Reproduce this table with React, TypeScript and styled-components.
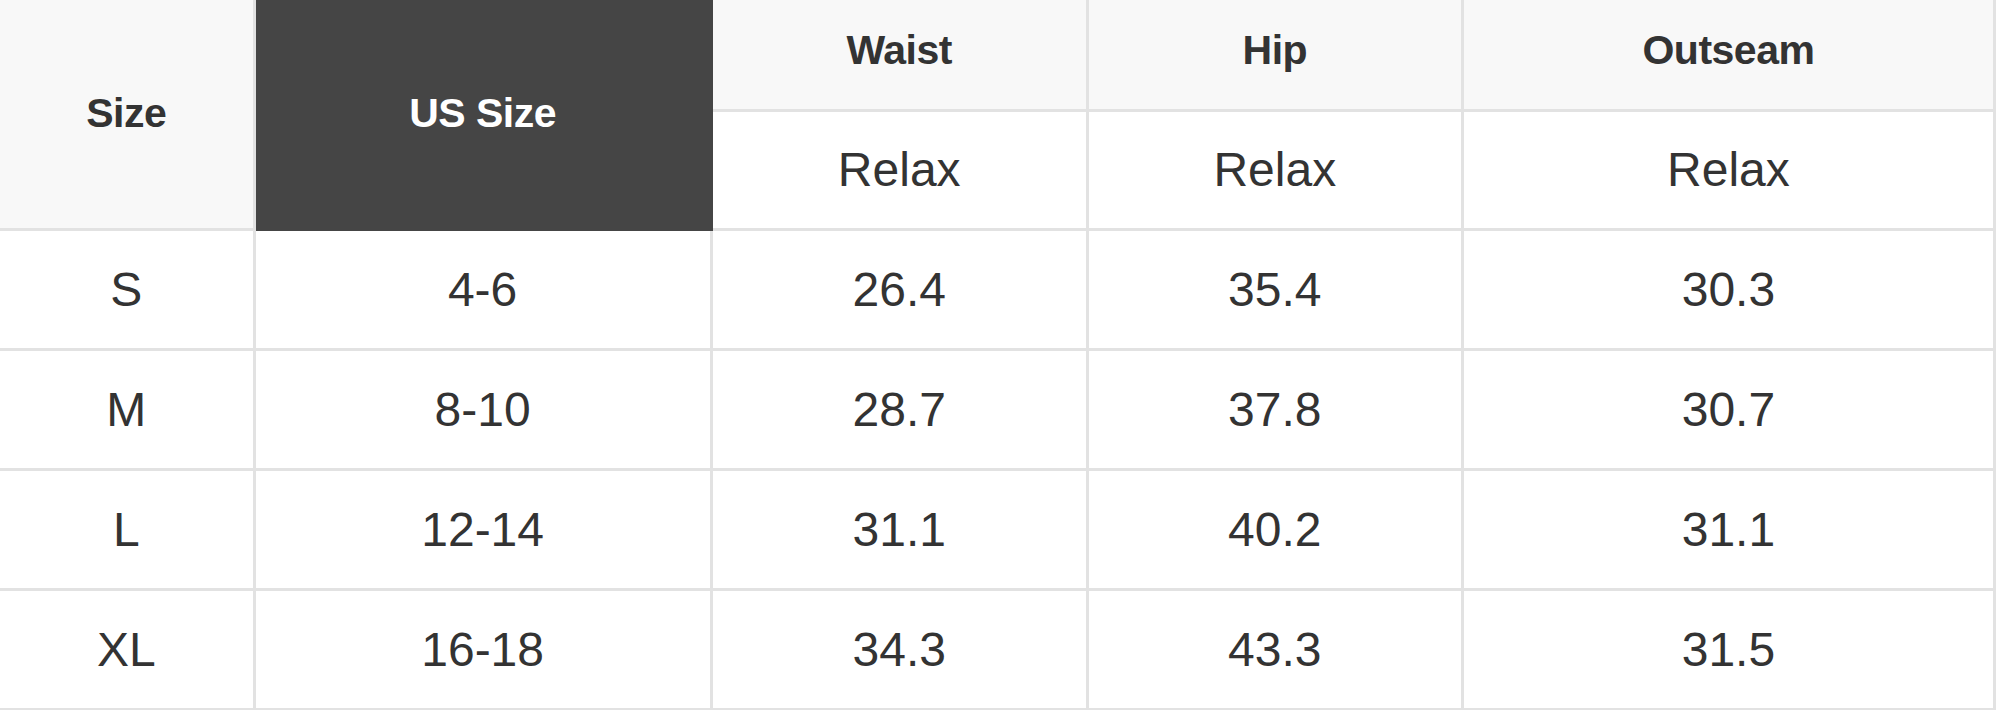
import React from "react";
import styled, { createGlobalStyle } from "styled-components";

const GlobalStyle = createGlobalStyle`
  html, body {
    margin: 0;
    padding: 0;
    background: #ffffff;
    overflow: hidden;
  }
  body {
    font-family: "Liberation Sans", Arial, sans-serif;
    color: #333333;
  }
`;

const rows = [
  { size: "S", us: "4-6", waist: "26.4", hip: "35.4", outseam: "30.3" },
  { size: "M", us: "8-10", waist: "28.7", hip: "37.8", outseam: "30.7" },
  { size: "L", us: "12-14", waist: "31.1", hip: "40.2", outseam: "31.1" },
  { size: "XL", us: "16-18", waist: "34.3", hip: "43.3", outseam: "31.5" },
];

const Table = styled.table`
  width: 1996px;
  border-collapse: collapse;
  table-layout: fixed;

  td,
  th {
    border: 3px solid #e2e2e2;
    text-align: center;
    vertical-align: middle;
    padding: 0;
  }

  tr > :first-child {
    border-left: 0;
  }

  thead tr:first-child > * {
    border-top: 0;
  }
`;

const HeadRow = styled.tr<{ $h: number }>`
  height: ${(p) => p.$h}px;
`;

const BodyRow = styled.tr`
  height: 120px;
`;

const HeadCell = styled.th<{ $dark?: boolean; $top?: boolean }>`
  background: ${(p) => (p.$dark ? "#454545" : "#f8f8f8")};
  color: ${(p) => (p.$dark ? "#ffffff" : "#333333")};
  font-weight: 700;
  font-size: 41px;
  letter-spacing: -0.5px;
  padding-bottom: ${(p) => (p.$top ? "8px" : "0")} !important;
  ${(p) => (p.$dark ? "border-color: #454545 !important;" : "")}
`;

const SubCell = styled.td`
  background: #ffffff;
  font-size: 48px;
  color: #333333;
`;

const Cell = styled.td`
  font-size: 48px;
  color: #333333;
`;

export default function App() {
  return (
    <>
      <GlobalStyle />
      <Table>
        <colgroup>
          <col style={{ width: 254 }} />
          <col style={{ width: 457 }} />
          <col style={{ width: 376 }} />
          <col style={{ width: 375 }} />
          <col style={{ width: 532 }} />
        </colgroup>
        <thead>
          <HeadRow $h={110}>
            <HeadCell rowSpan={2}>Size</HeadCell>
            <HeadCell rowSpan={2} $dark>
              US Size
            </HeadCell>
            <HeadCell $top>Waist</HeadCell>
            <HeadCell $top>Hip</HeadCell>
            <HeadCell $top>Outseam</HeadCell>
          </HeadRow>
          <HeadRow $h={119}>
            <SubCell>Relax</SubCell>
            <SubCell>Relax</SubCell>
            <SubCell>Relax</SubCell>
          </HeadRow>
        </thead>
        <tbody>
          {rows.map((r) => (
            <BodyRow key={r.size}>
              <Cell>{r.size}</Cell>
              <Cell>{r.us}</Cell>
              <Cell>{r.waist}</Cell>
              <Cell>{r.hip}</Cell>
              <Cell>{r.outseam}</Cell>
            </BodyRow>
          ))}
        </tbody>
      </Table>
    </>
  );
}
